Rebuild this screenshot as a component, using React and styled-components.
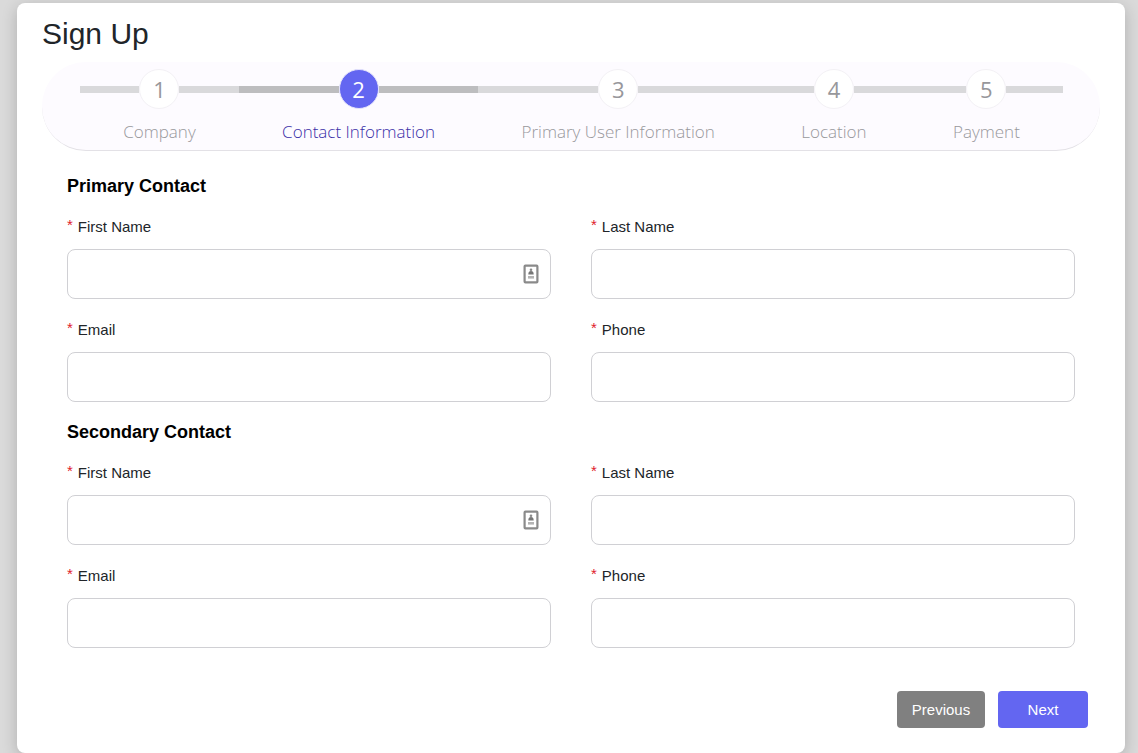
import React, { useState } from 'react';
import styled, { createGlobalStyle } from 'styled-components';

const GlobalStyle = createGlobalStyle`
  *, *::before, *::after {
    box-sizing: border-box;
  }

  body {
    margin: 0;
    background: #dadada;
    color: #212529;
    font-family: "Liberation Sans", Arial, sans-serif;
    font-size: 15px;
    line-height: 18px;
  }
`

const Page = styled.main`
  padding: 3px 13px 0 17px;
`

const Card = styled.div`
  padding: 13px 25px 25px;
  background: #fff;
  border-radius: 8px;
  box-shadow: 0 4px 16px rgba(0, 0, 0, 0.2);
`

const Title = styled.h1`
  margin: 0 0 10px;
  font-size: 30px;
  font-weight: 400;
  line-height: 36px;
`

const StepList = styled.ol`
  display: flex;
  margin: 0;
  padding: 7px 37px 6px 38px;
  list-style: none;
  background: #fdfbff;
  border-bottom: 1px solid #e3e1e6;
  border-radius: 44px;
  font-family: "Open Sans", "Noto Sans", sans-serif;
  font-weight: 300;
`

const Step = styled.li`
  flex: 1 1 auto;
  text-align: center;
  color: ${props => props.$active ? '#3a2fa8' : '#98989c'};
`

// the line on both sides of the circle
const Track = styled.div`
  display: flex;
  align-items: center;
  margin-bottom: 11px;

  &::before,
  &::after {
    content: "";
    flex: 1;
    height: 7px;
    background: ${props => props.$active ? '#bdbdbf' : '#d9d9db'};
  }
`

const Circle = styled.span`
  width: 40px;
  height: 40px;
  border: 1px solid ${props => props.$active ? '#e4e3fb' : '#f3f1f5'};
  border-radius: 50%;
  background: ${props => props.$active ? '#6366f1' : '#fff'};
  color: ${props => props.$active ? '#fff' : '#97979b'};
  font-size: 22px;
  font-weight: 400;
  line-height: 38px;
`

const StepLabel = styled.span`
  display: block;
  font-size: 17px;
  line-height: 24px;
  white-space: nowrap;
`

const Fieldset = styled.fieldset`
  min-width: 0;
  margin: 0;
  padding: 0 25px;
  border: 0;
`

const Legend = styled.h2`
  margin: 0 0 20px;
  color: #000;
  font-size: 18px;
  line-height: 24px;
`

const Form = styled.form`
  padding-top: 23px;

  ${Fieldset} + ${Fieldset} {
    margin-top: 18px;
  }
`

const FieldGrid = styled.div`
  display: grid;
  grid-template-columns: 1fr 1fr;
  gap: 22px 40px;
`

const Label = styled.label`
  display: flex;
  gap: 5px;
  margin-bottom: 13px;
`

const Required = styled.span`
  color: #e0202b;
  line-height: 14px;
`

const InputBox = styled.div`
  display: flex;
  align-items: center;
  height: 50px;
  padding-right: 11px;
  border: 1px solid #d0d0d4;
  border-radius: 8px;

  &:focus-within {
    border-color: #6366f1;
  }
`

const Input = styled.input`
  flex: 1;
  min-width: 0;
  height: 100%;
  padding: 0 12px;
  border: 0;
  outline: none;
  background: transparent;
  font: inherit;
`

const Actions = styled.div`
  display: flex;
  justify-content: flex-end;
  gap: 13px;
  padding: 43px 12px 0 0;
`

const Button = styled.button`
  min-width: ${props => props.$primary ? '90px' : '88px'};
  height: 37px;
  padding: 0 14px;
  border: 0;
  border-radius: 4px;
  background: ${props => props.$primary ? '#6366f1' : '#808080'};
  color: #fff;
  font: inherit;
  cursor: pointer;
`

const steps = ['Company', 'Contact Information', 'Primary User Information', 'Location', 'Payment'];

const fields = [
  { name: 'firstName', label: 'First Name', type: 'text', autofill: true },
  { name: 'lastName', label: 'Last Name', type: 'text' },
  { name: 'email', label: 'Email', type: 'email' },
  { name: 'phone', label: 'Phone', type: 'tel' }
];

const AutofillIcon = () => (
  <svg width="16" height="20" viewBox="0 0 16 20" fill="none" aria-hidden="true">
    <rect x="1.6" y="1.6" width="12.8" height="16.8" rx="0.8" stroke="#8a8a8a" strokeWidth="2.2" />
    <circle cx="8" cy="5.8" r="1.3" fill="#8a8a8a" />
    <path d="M5.3 10.4C5.3 8 6.4 7 8 7s2.7 1 2.7 3.4z" fill="#777" />
    <path d="M5 13.3h6" stroke="#b4b4b4" strokeWidth="2.6" />
  </svg>
)

const ContactFields = ({ id, title }) => (
  <Fieldset aria-labelledby={`${id}-title`}>
    <Legend id={`${id}-title`}>{title}</Legend>
    <FieldGrid>
      {fields.map(field => (
        <div key={field.name}>
          <Label htmlFor={`${id}-${field.name}`}>
            <Required>*</Required>
            {field.label}
          </Label>
          <InputBox>
            <Input id={`${id}-${field.name}`} name={`${id}-${field.name}`} type={field.type} required />
            {field.autofill && <AutofillIcon />}
          </InputBox>
        </div>
      ))}
    </FieldGrid>
  </Fieldset>
)

const App = () => {

  const [current, setCurrent] = useState(1);

  const next = (event) => {
    event.preventDefault();
    setCurrent(Math.min(current + 1, steps.length - 1));
  }

  return (
    <Page>
      <GlobalStyle />
      <Card>
        <Title>Sign Up</Title>
        <StepList>
          {steps.map((step, i) => (
            <Step key={step} $active={i === current} aria-current={i === current ? 'step' : undefined}>
              <Track $active={i === current}>
                <Circle $active={i === current}>{i + 1}</Circle>
              </Track>
              <StepLabel>{step}</StepLabel>
            </Step>
          ))}
        </StepList>
        <Form onSubmit={next}>
          <ContactFields id="primary" title="Primary Contact" />
          <ContactFields id="secondary" title="Secondary Contact" />
          <Actions>
            <Button type="button" onClick={() => setCurrent(Math.max(current - 1, 0))}>Previous</Button>
            <Button type="submit" $primary>Next</Button>
          </Actions>
        </Form>
      </Card>
    </Page>
  )
}

export default App;
